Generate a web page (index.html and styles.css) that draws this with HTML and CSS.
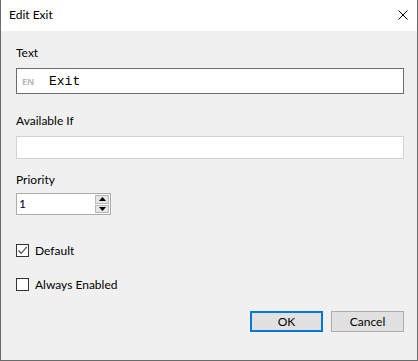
FILE: index.html
```html
<!DOCTYPE html>
<html lang="en">
<head>
    <meta charset="UTF-8">
    <title>Edit Exit</title>
    <link rel="stylesheet" href="styles.css">
</head>
<body>
    <div class="window">
        <div class="title-bar">
            <span class="title">Edit Exit</span>
            <span class="close-btn">
                <svg width="10" height="10" viewBox="0 0 10 10">
                    <path d="M0.5 0.5 L9.5 9.5 M9.5 0.5 L0.5 9.5" stroke="#000" stroke-width="1" fill="none"/>
                </svg>
            </span>
        </div>
        <div class="content">
            <div class="field">
                <div class="label">Text</div>
                <div class="text-box focused">
                    <span class="lang">EN</span>
                    <span class="mono">Exit</span>
                </div>
            </div>
            <div class="field available">
                <div class="label">Available If</div>
                <div class="text-box plain"></div>
            </div>
            <div class="field priority">
                <div class="label">Priority</div>
                <div class="spinner">
                    <span class="spin-value">1</span>
                    <div class="spin-buttons">
                        <div class="spin-btn">
                            <svg width="7" height="4" viewBox="0 0 7 4"><path d="M3.5 0 L7 4 L0 4 Z" fill="#000"/></svg>
                        </div>
                        <div class="spin-btn">
                            <svg width="7" height="4" viewBox="0 0 7 4"><path d="M0 0 L7 0 L3.5 4 Z" fill="#000"/></svg>
                        </div>
                    </div>
                </div>
            </div>
            <label class="check-row">
                <span class="checkbox">
                    <svg width="11" height="11" viewBox="0 0 11 11">
                        <path d="M1.5 5.5 L4.2 8.3 L9.8 1.8" stroke="#555" stroke-width="1.3" fill="none"/>
                    </svg>
                </span>
                <span>Default</span>
            </label>
            <label class="check-row">
                <span class="checkbox"></span>
                <span>Always Enabled</span>
            </label>
            <div class="buttons">
                <button class="btn ok">OK</button>
                <button class="btn">Cancel</button>
            </div>
        </div>
    </div>
</body>
</html>
```

FILE: styles.css
```css
html, body {
    margin: 0;
    padding: 0;
}

body {
    width: 418px;
    height: 361px;
    font-family: 'Lato', 'Noto Sans', sans-serif;
    font-size: 12px;
    color: #000;
    background: #f0f0f0;
}

.window {
    box-sizing: border-box;
    width: 418px;
    height: 361px;
    border: 1px solid #6a6a6a;
    border-top: none;
    display: flex;
    flex-direction: column;
    background: #f0f0f0;
}

/* Barra de titulo */
.title-bar {
    height: 31px;
    background: #fff;
    display: flex;
    align-items: center;
    justify-content: space-between;
    padding: 0 9px 0 8px;
}

.title {
    font-size: 12px;
    line-height: 16px;
    margin-top: -1px;
}

.close-btn {
    display: flex;
    margin-top: -2px;
}

.content {
    flex: 1;
    padding: 14px 13px 0 15px;
    display: flex;
    flex-direction: column;
}

.label {
    line-height: 16px;
    height: 16px;
}

.field {
    display: flex;
    flex-direction: column;
    margin-bottom: 19px;
}

.field.available {
    margin-bottom: 13px;
}

.text-box {
    box-sizing: border-box;
    background: #fff;
    margin-top: 7px;
    display: flex;
    align-items: center;
}

.text-box.focused {
    height: 26px;
    border: 1px solid #6c6c6c;
    padding-left: 5px;
}

.text-box.plain {
    height: 23px;
    border: 1px solid #d2d2d2;
}

.lang {
    font-family: 'Noto Sans', sans-serif;
    font-size: 9px;
    font-weight: bold;
    color: #b8b8b8;
    width: 27px;
    margin-top: 1px;
}

.mono {
    font-family: 'Liberation Mono', monospace;
    font-size: 13px;
    margin-top: 1px;
}

.field.priority {
    margin-bottom: 27px;
}

.spinner {
    box-sizing: border-box;
    width: 95px;
    height: 22px;
    margin-top: 5px;
    border: 1px solid #adadad;
    background: #fff;
    display: flex;
}

.spin-value {
    flex: 1;
    padding-left: 2px;
    line-height: 20px;
}

.spin-buttons {
    width: 14px;
    display: flex;
    flex-direction: column;
    padding: 1px 1px 1px 0;
    gap: 1px;
}

.spin-btn {
    flex: 1;
    box-sizing: border-box;
    border: 1px solid #b8b8b8;
    background: #e5e5e5;
    display: flex;
    align-items: center;
    justify-content: center;
}

.check-row {
    display: flex;
    align-items: center;
    gap: 6px;
    height: 16px;
    margin-bottom: 18px;
}

.checkbox {
    box-sizing: border-box;
    width: 13px;
    height: 13px;
    border: 1px solid #333;
    background: #fff;
    display: flex;
    align-items: center;
    justify-content: center;
}

.buttons {
    display: flex;
    justify-content: flex-end;
    gap: 8px;
    margin-top: 1px;
}

.btn {
    box-sizing: border-box;
    width: 73px;
    height: 21px;
    background: #e1e1e1;
    border: 1px solid #adadad;
    font-family: 'Lato', 'Noto Sans', sans-serif;
    font-size: 12px;
    padding: 0;
    color: #000;
}

.btn.ok {
    border: 2px solid #0078d7;
}
```
